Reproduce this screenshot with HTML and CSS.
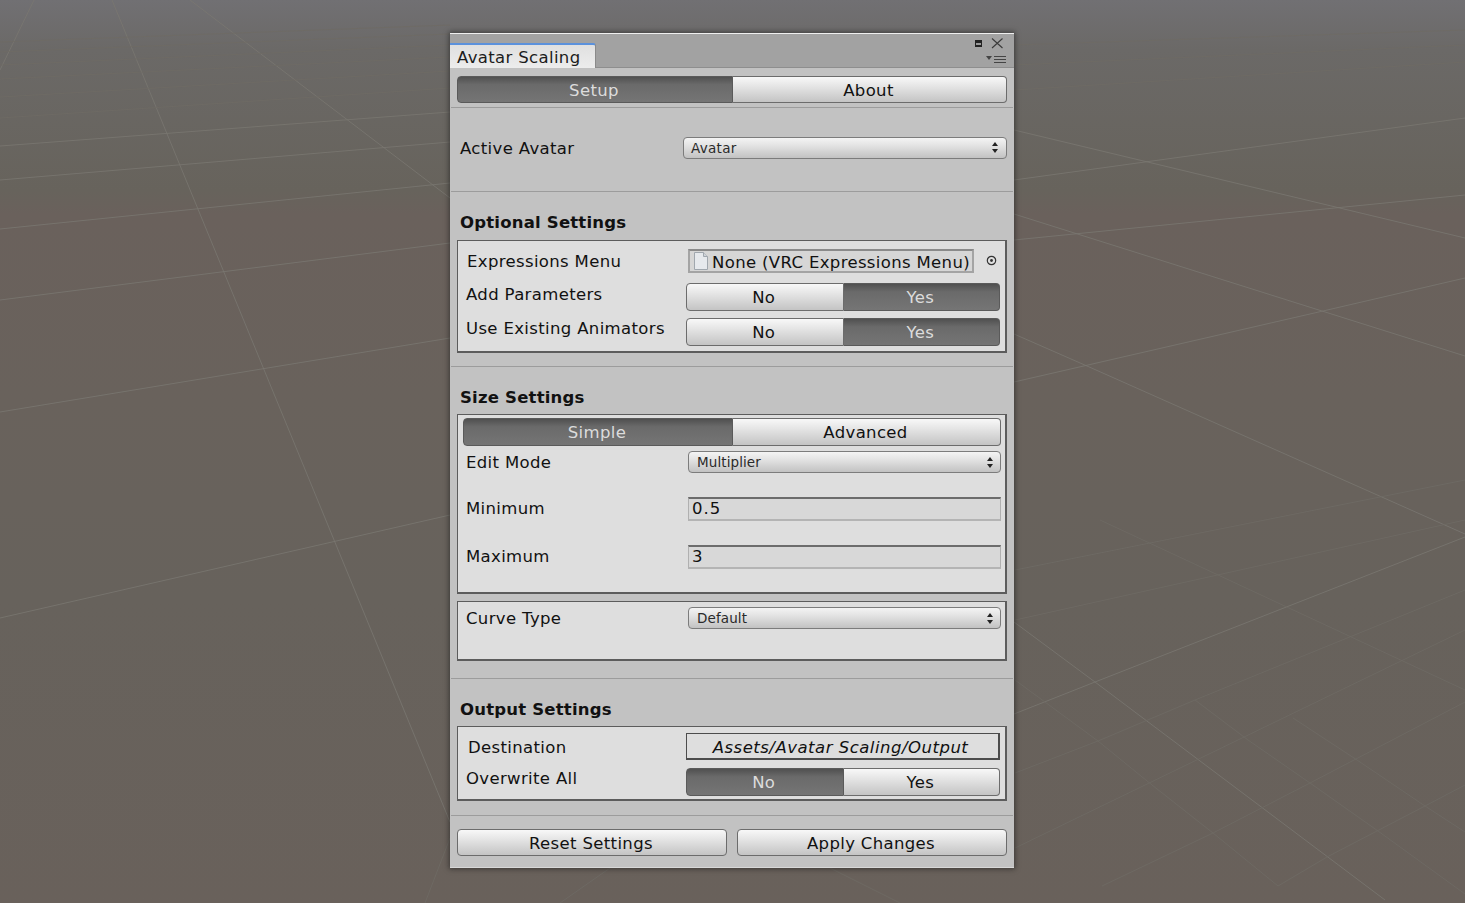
FILE: index.html
```html
<!DOCTYPE html>
<html>
<head>
<meta http-equiv="Content-Type" content="text/html; charset=utf-8"/>
<title>Avatar Scaling</title>
<link rel="stylesheet" href="styles.css">
</head>
<body>

<!-- scene view floor behind the window -->
<svg class="floor" width="1465" height="903" viewBox="0 0 1465 903">
  <g class="major">
    <path d="M34 0L0 70"/>
    <path d="M112 0L450 822"/>
    <path d="M190 0L450 198"/>
    <path d="M0 412L450 338"/>
    <path d="M0 300L450 243"/>
    <path d="M0 229L450 183"/>
    <path d="M0 180L450 142"/>
    <path d="M0 146L450 112"/>
    <path d="M0 618L450 515"/>
    <path d="M1014 334L1087 366L1465 534"/>
    <path d="M1014 382L1323 311L1465 278"/>
    <path d="M1014 214L1287 300L1465 356"/>
    <path d="M1014 622L1095 682L1385 900"/>
    <path d="M1014 714L1095 682L1465 537"/>
    <path d="M1014 180L1465 118"/>
    <path d="M1014 130L1465 238"/>
    <path d="M1014 240L1465 195"/>
  </g>
  <g class="minor">
    <path d="M0 118L450 88"/>
    <path d="M0 97L450 71"/>
    <path d="M0 79L450 57"/>
    <path d="M0 65L450 45"/>
    <path d="M0 52L450 34"/>
    <path d="M0 42L450 25"/>
    <path d="M1014 90L1465 62"/>
    <path d="M1014 65L1465 45"/>
    <path d="M1014 45L1465 30"/>
    <path d="M1015 848L1465 630"/>
    <path d="M1102 886L1213 833L1310 783L1465 702"/>
    <path d="M1015 773L1098 741L1195 700L1465 590"/>
    <path d="M1278 886L1327 857L1425 806L1465 785"/>
    <path d="M1015 680L1098 741L1152 785L1213 833L1278 886"/>
    <path d="M1195 700L1248 740L1310 783L1378 831L1465 894"/>
    <path d="M1293 718L1357 760L1425 806L1465 832"/>
    <path d="M1015 570L1465 480"/>
    <path d="M1015 620L1465 520"/>
    <path d="M1100 520L1465 690"/>
    <path d="M450 838L425 903"/>
    <path d="M610 868L560 903"/>
    <path d="M830 868L900 903"/>
  </g>
</svg>

<div class="window">
  <div class="tabbar">
    <div class="tab">Avatar Scaling</div>
    <div class="win-icons">
      <svg width="38" height="12" viewBox="0 0 38 12">
        <rect x="6" y="3" width="7" height="7" fill="#222"/>
        <rect x="7" y="6" width="5" height="2" fill="#9a9a9a"/>
        <path d="M23 1.5L33.5 11M33.5 1.5L23 11" stroke="#3a3a3a" stroke-width="1.1" fill="none"/>
      </svg>
      <svg class="menu-icon" width="22" height="8" viewBox="0 0 22 8">
        <path d="M0 1H6L3 5Z" fill="#444"/>
        <path d="M8 1.5H20M8 4.5H20M8 7.5H20" stroke="#444" stroke-width="1"/>
      </svg>
    </div>
  </div>

  <div class="section section-tabs">
    <div class="seg-group">
      <div class="seg on seg-setup">Setup</div>
      <div class="seg">About</div>
    </div>
  </div>

  <div class="section section-avatar">
    <div class="title-label">Active Avatar</div>
    <div class="dropdown dropdown-main">
      <span>Avatar</span>
      <svg width="6" height="11" viewBox="0 0 6 11"><path d="M3 0L6 4H0ZM3 11L0 7H6Z" fill="#222"/></svg>
    </div>
  </div>

  <div class="section section-optional">
    <div class="heading">Optional Settings</div>
    <div class="box box-optional">
      <div class="row row-expr">
        <div class="label label-shift">Expressions Menu</div>
        <div class="object-field">
          <svg width="16" height="18" viewBox="0 0 16 18">
            <path d="M1.5 .5H10.5L14.5 4.5V17.5H1.5Z" fill="#e6e9ed" stroke="#a0a7ae"/>
            <path d="M10.5 .5V4.5H14.5" fill="#cfd3d8" stroke="#a0a7ae"/>
          </svg>
          <span>None (VRC Expressions Menu)</span>
        </div>
        <div class="picker">
          <svg width="11" height="11" viewBox="0 0 11 11">
            <circle cx="5.5" cy="5.5" r="4.2" fill="none" stroke="#333" stroke-width="1.2"/>
            <circle cx="5.5" cy="5.5" r="1.4" fill="#333"/>
          </svg>
        </div>
      </div>
      <div class="row row-params">
        <div class="label label-drop">Add Parameters</div>
        <div class="seg-group toggle">
          <div class="seg">No</div>
          <div class="seg on">Yes</div>
        </div>
      </div>
      <div class="row row-anim">
        <div class="label">Use Existing Animators</div>
        <div class="seg-group toggle">
          <div class="seg">No</div>
          <div class="seg on">Yes</div>
        </div>
      </div>
    </div>
  </div>

  <div class="section section-size">
    <div class="heading heading-size">Size Settings</div>
    <div class="box box-size">
      <div class="seg-group size-tabs">
        <div class="seg on seg-simple">Simple</div>
        <div class="seg">Advanced</div>
      </div>
      <div class="row row-mode">
        <div class="label">Edit Mode</div>
        <div class="dropdown">
          <span>Multiplier</span>
          <svg width="6" height="11" viewBox="0 0 6 11"><path d="M3 0L6 4H0ZM3 11L0 7H6Z" fill="#222"/></svg>
        </div>
      </div>
      <div class="row row-min">
        <div class="label">Minimum</div>
        <div class="number-field">0.5</div>
      </div>
      <div class="row row-max">
        <div class="label">Maximum</div>
        <div class="number-field">3</div>
      </div>
    </div>
    <div class="box box-curve">
      <div class="row row-curve">
        <div class="label">Curve Type</div>
        <div class="dropdown">
          <span>Default</span>
          <svg width="6" height="11" viewBox="0 0 6 11"><path d="M3 0L6 4H0ZM3 11L0 7H6Z" fill="#222"/></svg>
        </div>
      </div>
    </div>
  </div>

  <div class="section section-output">
    <div class="heading heading-size">Output Settings</div>
    <div class="box box-output">
      <div class="row row-dest">
        <div class="label label-shift2">Destination</div>
        <div class="path-field">Assets/Avatar Scaling/Output</div>
      </div>
      <div class="row row-over">
        <div class="label">Overwrite All</div>
        <div class="seg-group toggle">
          <div class="seg on">No</div>
          <div class="seg">Yes</div>
        </div>
      </div>
    </div>
  </div>

  <div class="footer">
    <div class="btn">Reset Settings</div>
    <div class="btn">Apply Changes</div>
  </div>
</div>

</body>
</html>
```

FILE: styles.css
```css
html, body {
  margin: 0;
  height: 100%;
}

body {
  width: 1465px;
  height: 903px;
  overflow: hidden;
  box-sizing: border-box;
  padding: 33px 0 0 450px;
  font-family: "DejaVu Sans", sans-serif;
  font-size: 16.5px;
  letter-spacing: .35px;
  color: #111;
  background: linear-gradient(#717073 0, #6b6967 50px, #67635c 190px, #6a615c 215px, #69625c 400px, #67625c 600px, #69615b 903px);
}

.floor {
  position: absolute;
  left: 0;
  top: 0;
}
.floor path {
  fill: none;
}
.major path {
  stroke: #7a7771;
  stroke-width: .8;
}
.minor path {
  stroke: #6f6b65;
  stroke-width: .8;
}

.window {
  position: relative;
  width: 564px;
  height: 835px;
  box-sizing: border-box;
  background: #c2c2c2;
  border-top: 1px solid #efefef;
  border-bottom: 1px solid #d8d8d8;
  box-shadow: 0 0 5px 1px rgba(20, 20, 20, .55);
}

.tabbar {
  height: 34px;
  box-sizing: border-box;
  display: flex;
  background: #a2a2a2;
  border-bottom: 1px solid #8e8e8e;
}
.tab {
  align-self: flex-end;
  width: 146px;
  height: 25px;
  margin-bottom: -1px;
  box-sizing: border-box;
  padding-left: 7px;
  line-height: 25px;
  background: linear-gradient(#e0e0e0, #ececec);
  border-top: 2px solid #5b91dc;
  border-right: 1px solid #8a8a8a;
  border-radius: 0 3px 0 0;
  color: #1c1c1c;
}
.win-icons {
  margin-left: auto;
  width: 38px;
  padding: 3px 7px 0 0;
  line-height: 0;
}
.menu-icon {
  margin: 6px 0 0 17px;
}

.section {
  box-sizing: border-box;
  border-bottom: 1px solid #9c9c9c;
  margin: 0 1px;
  padding: 0 6px;
}
.section-tabs {
  height: 40px;
  padding-top: 8px;
}
.section-avatar {
  height: 84px;
  display: flex;
  align-items: center;
  justify-content: space-between;
  padding-bottom: 4px;
}
.section-optional {
  height: 175px;
  padding-top: 20px;
}
.section-size {
  height: 312px;
  padding-top: 20px;
}
.section-output {
  height: 137px;
  padding-top: 20px;
}

.title-label {
  padding: 2px 0 0 3px;
}
.heading {
  font-weight: bold;
  line-height: 22px;
  letter-spacing: .2px;
  padding-left: 3px;
  margin-bottom: 6px;
}
.heading-size {
  margin-bottom: 5px;
}

.box {
  box-sizing: border-box;
  background: #dedede;
  border: 1px solid #5c5c5c;
  border-width: 1px 2px 2px 1px;
  padding: 0 4px 0 8px;
}
.box-optional {
  height: 113px;
}
.box-size {
  height: 180px;
}
.box-curve {
  height: 60px;
  margin-top: 7px;
}
.box-output {
  height: 75px;
}

.row {
  display: flex;
  justify-content: space-between;
  align-items: flex-start;
}
.label {
  line-height: 22px;
}
.label-shift {
  margin: 0 auto 0 1px;
  padding-top: 2px;
}
.label-shift2 {
  margin-left: 2px;
  padding-top: 4px;
}
.label-drop {
  padding-top: 1px;
}

.row-expr {
  margin-top: 8px;
}
.row-params {
  margin-top: 10px;
}
.row-anim {
  margin-top: 7px;
}
.row-mode {
  margin-top: 5px;
}
.row-mode .label {
  padding-top: 1px;
}
.row-min {
  margin-top: 23px;
}
.row-max {
  margin-top: 24px;
}
.row-min .label, .row-max .label {
  padding-top: 1px;
}
.row-curve {
  margin-top: 5px;
}
.row-curve .label {
  padding-top: 1px;
}
.row-dest {
  margin-top: 6px;
}
.row-over {
  margin-top: 8px;
}

.seg-group {
  display: flex;
  height: 27px;
}
.seg {
  flex: 1;
  box-sizing: border-box;
  text-align: center;
  padding-right: 2px;
  line-height: 28px;
  color: #111;
  background: linear-gradient(#f8f8f8, #e6e6e6 35%, #c4c4c4);
  border: 1px solid #6c6c6c;
  border-left: 0;
}
.seg:first-child {
  border-left: 1px solid #6c6c6c;
  border-radius: 4px 0 0 4px;
}
.seg:last-child {
  border-radius: 0 4px 4px 0;
}
.seg.on {
  color: #dcdcdc;
  background: linear-gradient(#505050, #6a6a6a 30%, #757575);
  border-color: #5a5a5a;
}
.seg-setup {
  flex: 0 0 276px;
}
.seg-simple {
  flex: 0 0 270px;
}
.toggle {
  width: 314px;
  height: 28px;
  margin-right: 1px;
}
.size-tabs {
  height: 28px;
  margin: 3px 0 0 -3px;
}

.dropdown {
  width: 313px;
  height: 22px;
  box-sizing: border-box;
  display: flex;
  align-items: center;
  justify-content: space-between;
  padding: 0 7px 0 8px;
  font-size: 13.5px;
  letter-spacing: .1px;
  color: #2a2a2a;
  background: linear-gradient(#f4f4f4, #e2e2e2 40%, #c2c2c2);
  border: 1px solid #7c7c7c;
  border-radius: 4px;
}
.dropdown-main {
  width: 324px;
  padding: 0 8px 0 7px;
  letter-spacing: .3px;
}

.object-field {
  width: 286px;
  height: 24px;
  box-sizing: border-box;
  display: flex;
  align-items: center;
  gap: 3px;
  padding-left: 3px;
  white-space: nowrap;
  overflow: hidden;
  background: #d6d6d6;
  border: 2px solid #a4a4a4;
  border-top-color: #8a8a8a;
}
.object-field span {
  padding-top: 2px;
}
.picker {
  width: 27px;
  line-height: 0;
  padding: 6px 0 0 12px;
  box-sizing: border-box;
}

.number-field {
  width: 313px;
  height: 24px;
  box-sizing: border-box;
  padding-left: 3px;
  line-height: 19px;
  letter-spacing: 1px;
  background: #d8d8d8;
  border: 1px solid #b0b0b0;
  border-top: 2px solid #6c6c6c;
  border-bottom: 2px solid #b4b4b4;
}

.path-field {
  width: 314px;
  height: 27px;
  margin-right: 1px;
  box-sizing: border-box;
  text-align: center;
  padding-right: 4px;
  font-style: italic;
  letter-spacing: .5px;
  line-height: 27px;
  white-space: nowrap;
  border: 1px solid #4c4c4c;
  border-bottom-width: 2px;
  border-right-width: 2px;
}

.footer {
  display: flex;
  justify-content: space-between;
  padding: 13px 7px 0;
}
.btn {
  width: 270px;
  height: 27px;
  box-sizing: border-box;
  text-align: center;
  padding-right: 2px;
  line-height: 28px;
  background: linear-gradient(#f8f8f8, #e6e6e6 35%, #c4c4c4);
  border: 1px solid #6c6c6c;
  border-radius: 4px;
}
```
